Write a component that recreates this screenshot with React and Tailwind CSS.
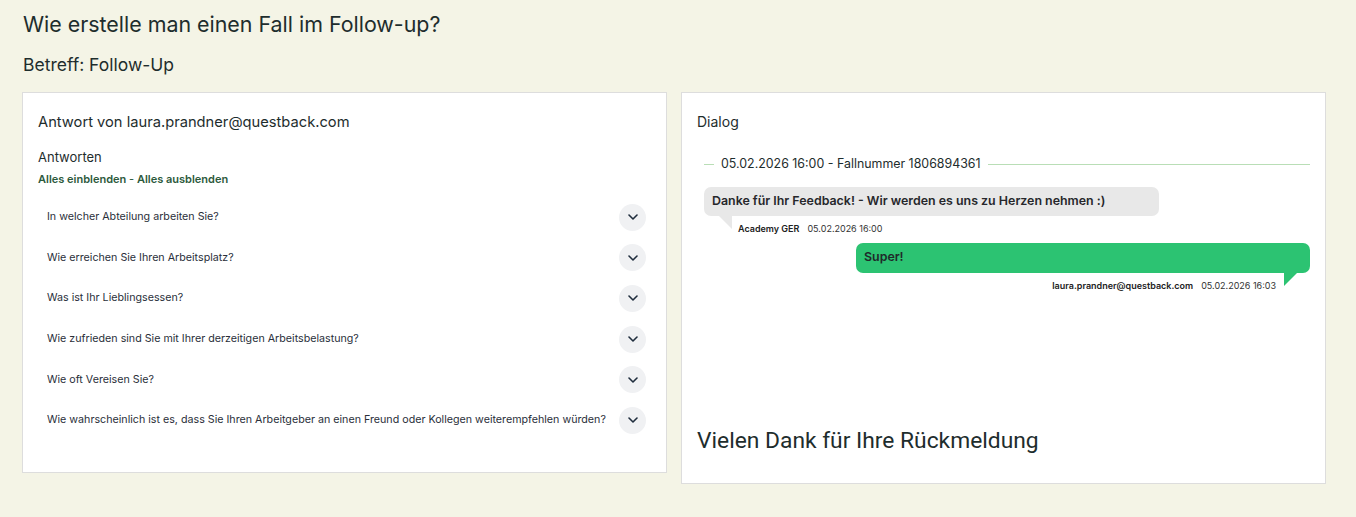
import React from "react";

const questions = [
  "In welcher Abteilung arbeiten Sie?",
  "Wie erreichen Sie Ihren Arbeitsplatz?",
  "Was ist Ihr Lieblingsessen?",
  "Wie zufrieden sind Sie mit Ihrer derzeitigen Arbeitsbelastung?",
  "Wie oft Vereisen Sie?",
  "Wie wahrscheinlich ist es, dass Sie Ihren Arbeitgeber an einen Freund oder Kollegen weiterempfehlen würden?",
];

function Chevron() {
  return (
    <div className="w-[27px] h-[27px] rounded-full bg-[#f0f1f3] flex items-center justify-center shrink-0">
      <svg width="10" height="6" viewBox="0 0 10 6" fill="none">
        <path d="M1 1l4 4 4-4" stroke="#1f2d3d" strokeWidth="1.6" strokeLinecap="round" strokeLinejoin="round" />
      </svg>
    </div>
  );
}

export default function App() {
  return (
    <div className="min-h-[517px] bg-[#f4f4e6] text-[#1e2d2d] px-[22px] pt-[10px] pb-[34px]" style={{ fontFamily: "Inter, 'Noto Sans', sans-serif" }}>
      <h1 className="text-[21.4px] leading-[28px] m-0 ml-[1px]">Wie erstelle man einen Fall im Follow-up?</h1>
      <h2 className="text-[17.5px] leading-[24px] mt-[15px] ml-[1px]">Betreff: Follow-Up</h2>
      <div className="flex gap-[14px] mt-[15px] items-start">
        <div className="w-[645px] h-[381px] bg-white border border-[#dddddd] pt-[19px] px-[15px]">
          <div className="text-[14.7px] leading-[20px]">Antwort von laura.prandner@questback.com</div>
          <div className="text-[13px] leading-[18px] mt-[16px]">Antworten</div>
          <div className="text-[11px] leading-[14px] font-semibold mt-[6px] text-[#2c5a3c]">
            Alles einblenden <span className="font-normal">-</span> Alles ausblenden
          </div>
          <div className="mt-[11px] flex flex-col">
            {questions.map((q) => (
              <div key={q} className="flex items-center justify-between h-[40.6px] pl-[9px] pr-[5px]">
                <span className="text-[10.7px] text-[#2a2f3a] whitespace-nowrap">{q}</span>
                <Chevron />
              </div>
            ))}
          </div>
        </div>
        <div className="w-[645px] h-[392px] bg-white border border-[#dddddd] pt-[19px] px-[15px] flex flex-col">
          <div className="text-[14px] leading-[20px]">Dialog</div>
          <div className="flex items-center mt-[23px] pl-[7px] pr-[0px]">
            <div className="w-[10px] h-px bg-[#b9deb6]" />
            <span className="text-[12.4px] px-[7px] leading-[18px]">05.02.2026 16:00 - Fallnummer 1806894361</span>
            <div className="flex-1 h-px bg-[#b9deb6]" />
          </div>
          <div className="mt-[14px] pl-[7px]">
            <div className="w-[455px] h-[29px] bg-[#e8e8e8] rounded-[7px] px-[8px] flex items-center text-[12.4px] font-semibold text-[#26272b]">
              Danke für Ihr Feedback! - Wir werden es uns zu Herzen nehmen :)
            </div>
            <div className="flex items-start">
              <svg width="13" height="13" viewBox="0 0 13 13" className="ml-[15px] shrink-0">
                <polygon points="0,0 13,0 13,13" fill="#e8e8e8" />
              </svg>
              <div className="text-[9px] mt-[6px] ml-[6px] flex gap-[8px]">
                <span className="font-semibold text-[#222]">Academy GER</span>
                <span className="text-[#333]">05.02.2026 16:00</span>
              </div>
            </div>
          </div>
          <div className="mt-[7px] flex flex-col items-end">
            <div className="w-[454px] h-[30px] bg-[#2cc372] rounded-[7px] px-[8px] flex items-center text-[12.4px] font-semibold text-[#1f2a2a]">
              Super!
            </div>
            <div className="flex items-start">
              <div className="text-[9px] mt-[6px] mr-[8px] flex gap-[8px]">
                <span className="font-semibold text-[#222]">laura.prandner@questback.com</span>
                <span className="text-[#333]">05.02.2026 16:03</span>
              </div>
              <svg width="13" height="13" viewBox="0 0 13 13" className="mr-[13px] shrink-0">
                <polygon points="0,0 13,0 0,13" fill="#2cc372" />
              </svg>
            </div>
          </div>
          <div className="mt-auto mb-[27px] text-[22.8px] leading-[30px] text-[#1e2d2d]" style={{ fontFamily: "Roboto, sans-serif" }}>
            Vielen Dank für Ihre Rückmeldung
          </div>
        </div>
      </div>
    </div>
  );
}
